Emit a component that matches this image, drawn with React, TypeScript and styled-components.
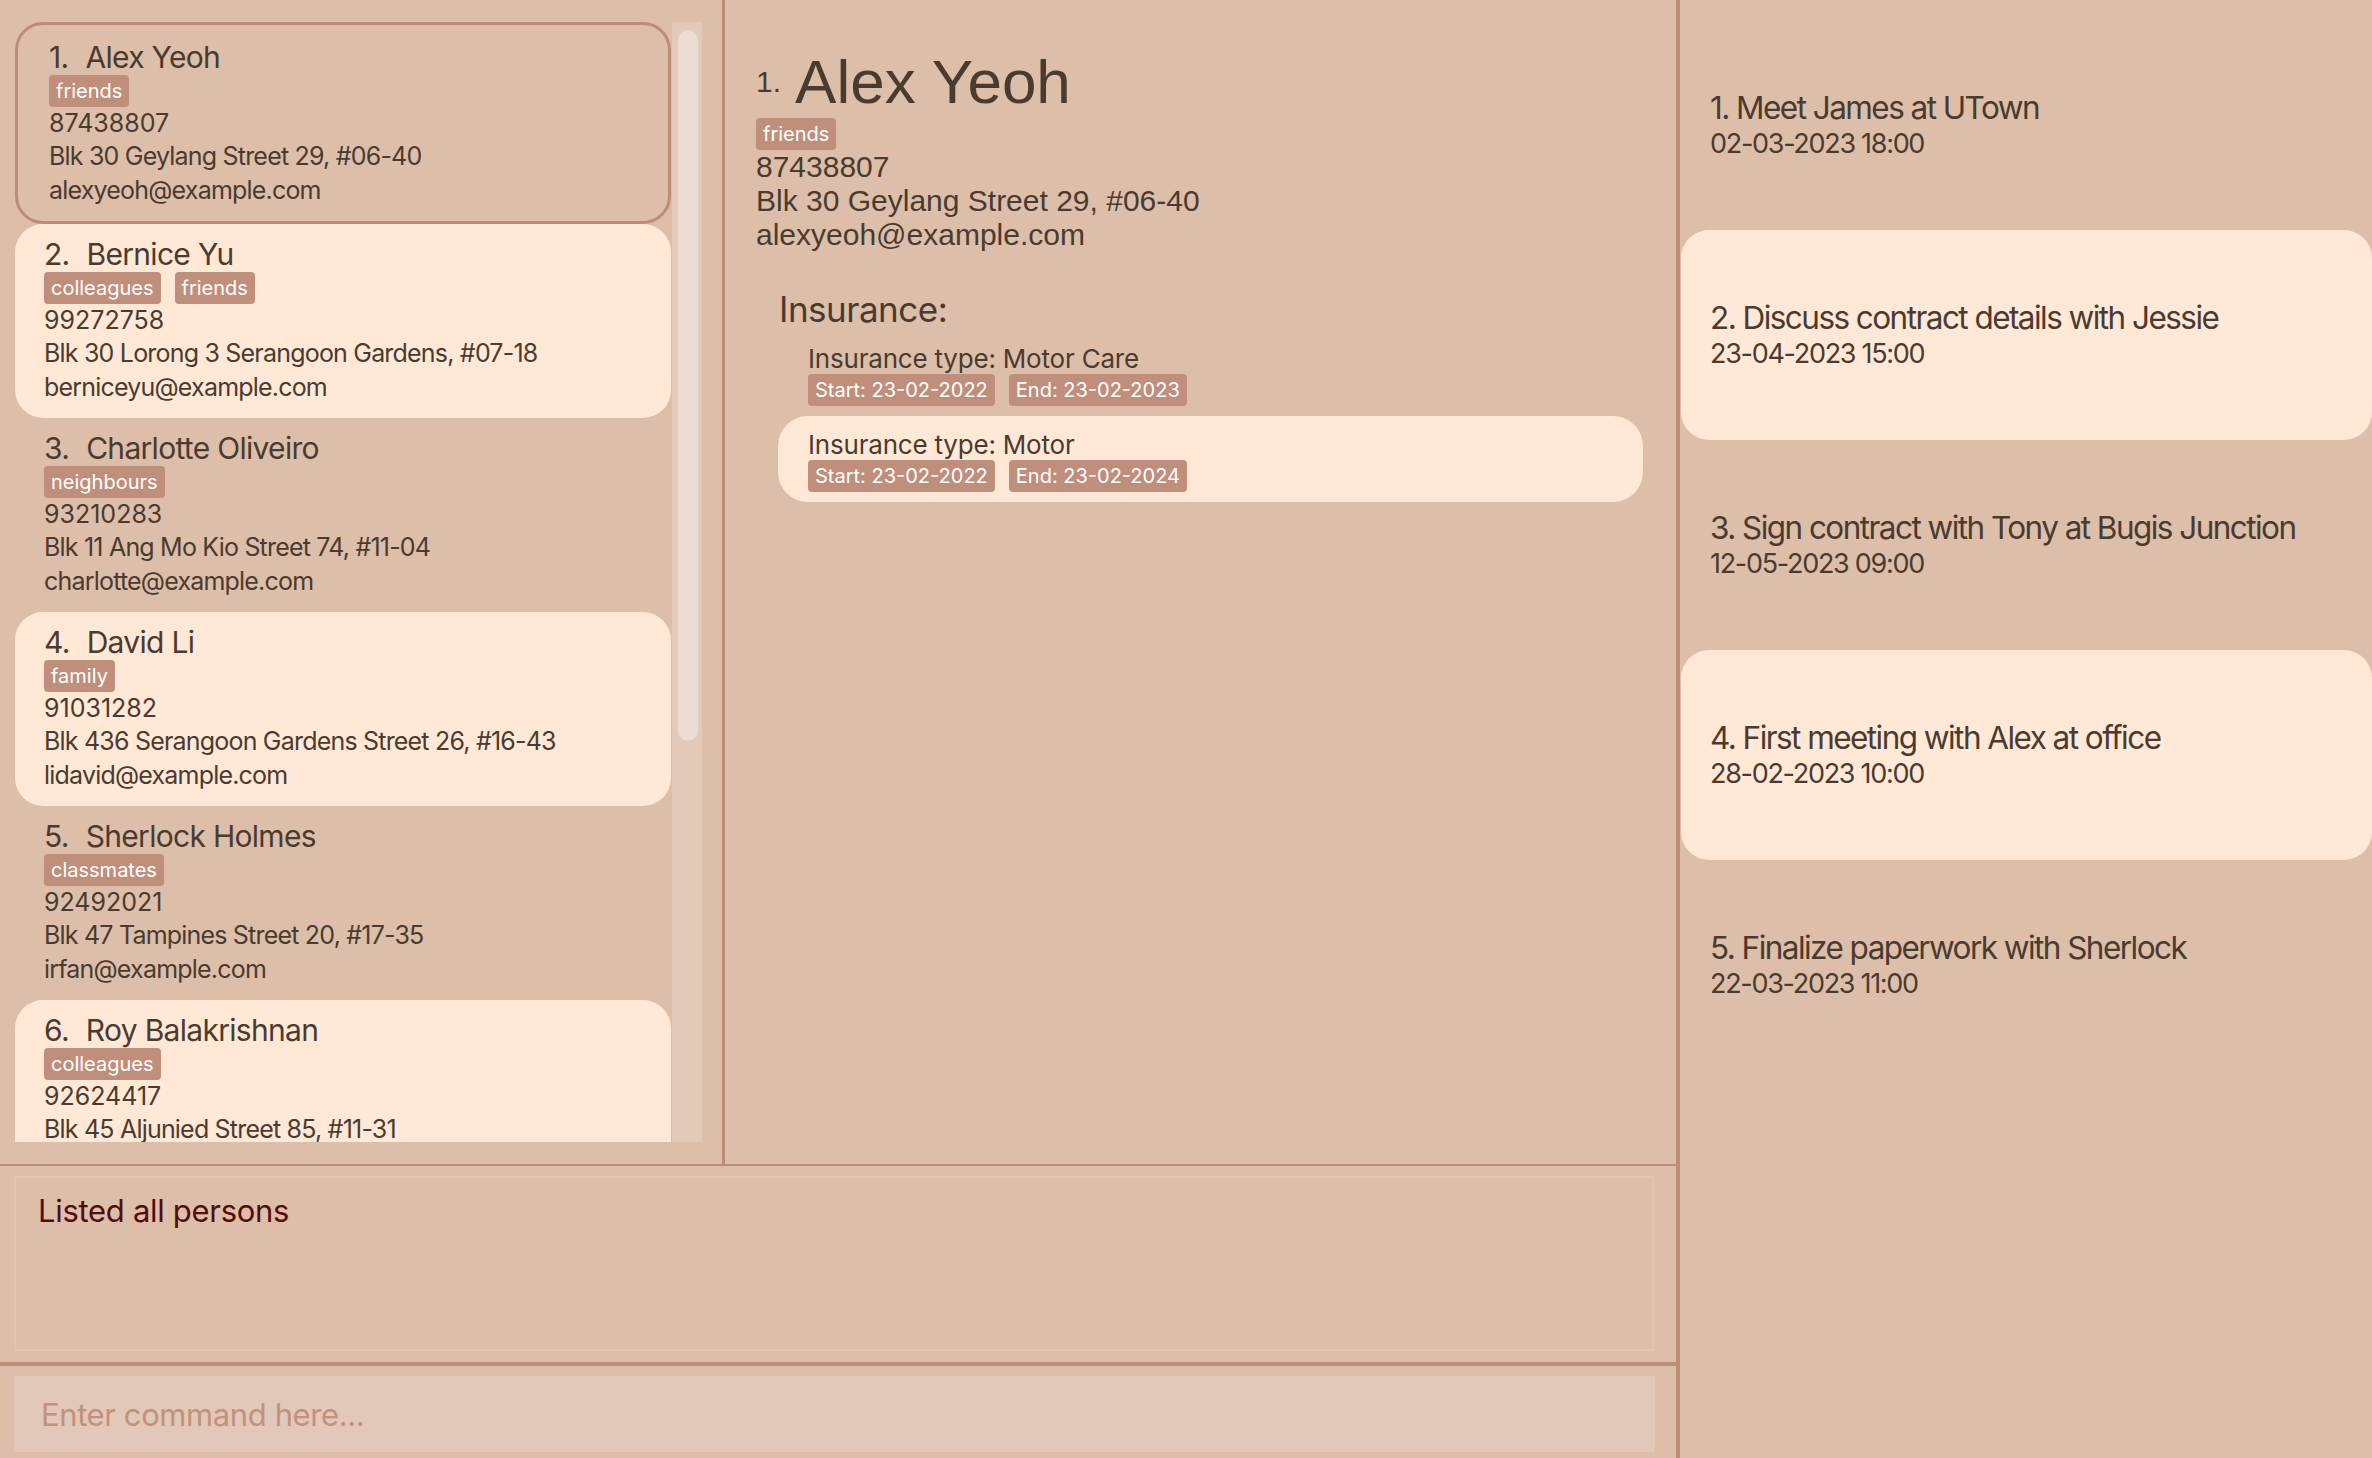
import React from "react";
import styled, { createGlobalStyle } from "styled-components";

const BG = "#DDBEA9";
const LIGHT = "#FFE8D6";
const LINE = "#BD8C77";
const TAG = "#BF8F7B";
const TEXT = "#4A3B30";
const SANS = `Inter, "Noto Sans", "Liberation Sans", sans-serif`;
const HELV = `"Liberation Sans", Arial, sans-serif`;

const Global = createGlobalStyle`
  html, body { margin: 0; padding: 0; background: ${BG}; }
  body { overflow: hidden; }
  * { box-sizing: border-box; }
`;

const Shell = styled.div`
  display: flex;
  width: 2372px;
  height: 1458px;
  background: ${BG};
  overflow: hidden;
  color: ${TEXT};
  font-family: ${SANS};
`;

const MainColumn = styled.div`
  width: 1676px;
  flex: none;
  display: flex;
  flex-direction: column;
`;

const TopArea = styled.div`
  height: 1164px;
  display: flex;
`;

const ListPanel = styled.div`
  width: 722px;
  flex: none;
  padding: 22px 0 0 15px;
`;

const ListViewport = styled.div`
  height: 1120px;
  display: flex;
  align-items: flex-start;
`;

const CardColumn = styled.div`
  width: 656px;
  height: 100%;
  overflow: hidden;
  display: flex;
  flex-direction: column;
`;

const Card = styled.div<{ $alt: boolean; $selected: boolean }>`
  flex: none;
  border-radius: 28px;
  background: ${(p) => (p.$alt ? LIGHT : "transparent")};
  border: ${(p) => (p.$selected ? `3px solid ${LINE}` : "none")};
  padding: ${(p) => (p.$selected ? "13.5px 20px 13.5px 31px" : "12px 20px 13.5px 29px")};
  display: flex;
  flex-direction: column;
`;

const NameRow = styled.div`
  display: flex;
  align-items: baseline;
  font-size: 30px;
  line-height: 36px;
  letter-spacing: -0.7px;
  white-space: nowrap;
`;

const Index = styled.span`
  margin-right: 17px;
`;

const TagRow = styled.div`
  display: flex;
  gap: 14px;
  height: 32px;
`;

const Tag = styled.span`
  display: inline-flex;
  align-items: center;
  height: 32px;
  padding: 0 7px;
  border-radius: 4px;
  background: ${TAG};
  color: #ffffff;
  font-family: ${SANS};
  font-size: 20px;
  white-space: nowrap;
`;

const Field = styled.div<{ $numeric?: boolean }>`
  font-size: 25px;
  line-height: 33.5px;
  letter-spacing: ${(p) => (p.$numeric ? "0px" : "-0.8px")};
  white-space: nowrap;
`;

const ScrollTrack = styled.div`
  width: 30px;
  height: 100%;
  margin-left: 1px;
  background: #e3c9b8;
  padding: 8px 4px 0 6px;
`;

const ScrollThumb = styled.div`
  height: 711px;
  border-radius: 10px;
  background: #eddcd1;
`;

const VDivider = styled.div<{ $w: number }>`
  width: ${(p) => p.$w}px;
  flex: none;
  background: ${LINE};
`;

const DetailPanel = styled.div`
  flex: 1;
  padding: 47px 33px 0 31px;
  font-family: ${HELV};
`;

const DetailHeader = styled.div`
  display: flex;
  align-items: center;
  height: 70px;
  white-space: nowrap;
`;

const DetailIndex = styled.span`
  font-size: 30px;
  margin-right: 14px;
`;

const DetailName = styled.span`
  font-size: 62px;
  line-height: 70px;
`;

const DetailTags = styled.div`
  display: flex;
  gap: 14px;
  margin-top: 1px;
`;

const DetailField = styled.div`
  font-size: 30px;
  line-height: 34px;
  white-space: nowrap;
`;

const InsuranceSection = styled.div`
  margin: 36px 0 0 22px;
  font-family: ${SANS};
`;

const InsuranceHeading = styled.div`
  font-size: 35px;
  line-height: 42px;
  letter-spacing: -0.5px;
  padding-left: 1px;
`;

const InsuranceItem = styled.div<{ $alt: boolean }>`
  height: 86px;
  border-radius: 30px;
  background: ${(p) => (p.$alt ? LIGHT : "transparent")};
  padding: 14px 30px 10px 30px;
`;

const InsuranceType = styled.div`
  font-size: 26px;
  line-height: 30px;
  letter-spacing: -0.2px;
  white-space: nowrap;
`;

const HLine = styled.div<{ $h: number }>`
  height: ${(p) => p.$h}px;
  flex: none;
  background: ${LINE};
`;

const ResultSection = styled.div`
  height: 196px;
  padding: 10px 22px 11px 14px;
`;

const ResultBox = styled.div`
  height: 100%;
  border: 2px solid #e2c5b2;
  padding: 13px 22px;
  color: #540c0c;
  font-size: 31px;
  line-height: 39px;
  letter-spacing: -0.3px;
`;

const CommandSection = styled.div`
  flex: 1;
  padding: 10px 21px 6px 14px;
`;

const CommandInput = styled.input`
  width: 100%;
  height: 76px;
  border: none;
  outline: none;
  background: #e2c8b8;
  padding: 0 27px;
  font-family: ${SANS};
  font-size: 31px;
  letter-spacing: -0.4px;
  color: ${TEXT};
  &::placeholder {
    color: #c2917c;
  }
`;

const RightPanel = styled.div`
  flex: 1;
  padding: 20px 0 0 1px;
  display: flex;
  flex-direction: column;
`;

const EventCell = styled.div<{ $alt: boolean }>`
  height: 210px;
  flex: none;
  border-radius: 28px;
  background: ${(p) => (p.$alt ? LIGHT : "transparent")};
  padding-left: 29px;
  display: flex;
  flex-direction: column;
  justify-content: center;
`;

const EventTitle = styled.div`
  font-size: 31.5px;
  line-height: 38px;
  letter-spacing: -1.55px;
  white-space: nowrap;
`;

const EventDate = styled.div`
  font-size: 27px;
  line-height: 34px;
  letter-spacing: -1.3px;
  white-space: nowrap;
`;

type Person = {
  name: string;
  tags: string[];
  phone: string;
  address: string;
  email: string;
};

const persons: Person[] = [
  { name: "Alex Yeoh", tags: ["friends"], phone: "87438807", address: "Blk 30 Geylang Street 29, #06-40", email: "alexyeoh@example.com" },
  { name: "Bernice Yu", tags: ["colleagues", "friends"], phone: "99272758", address: "Blk 30 Lorong 3 Serangoon Gardens, #07-18", email: "berniceyu@example.com" },
  { name: "Charlotte Oliveiro", tags: ["neighbours"], phone: "93210283", address: "Blk 11 Ang Mo Kio Street 74, #11-04", email: "charlotte@example.com" },
  { name: "David Li", tags: ["family"], phone: "91031282", address: "Blk 436 Serangoon Gardens Street 26, #16-43", email: "lidavid@example.com" },
  { name: "Sherlock Holmes", tags: ["classmates"], phone: "92492021", address: "Blk 47 Tampines Street 20, #17-35", email: "irfan@example.com" },
  { name: "Roy Balakrishnan", tags: ["colleagues"], phone: "92624417", address: "Blk 45 Aljunied Street 85, #11-31", email: "royb@example.com" },
];

const insurances = [
  { type: "Motor Care", start: "23-02-2022", end: "23-02-2023" },
  { type: "Motor", start: "23-02-2022", end: "23-02-2024" },
];

const events = [
  { title: "Meet James at UTown", when: "02-03-2023 18:00" },
  { title: "Discuss contract details with Jessie", when: "23-04-2023 15:00" },
  { title: "Sign contract with Tony at Bugis Junction", when: "12-05-2023 09:00" },
  { title: "First meeting with Alex at office", when: "28-02-2023 10:00" },
  { title: "Finalize paperwork with Sherlock", when: "22-03-2023 11:00" },
];

export default function App() {
  const sel = persons[0];
  return (
    <>
      <Global />
      <Shell>
        <MainColumn>
          <TopArea>
            <ListPanel>
              <ListViewport>
                <CardColumn>
                  {persons.map((p, i) => (
                    <Card key={p.name} $alt={i % 2 === 1} $selected={i === 0}>
                      <NameRow>
                        <Index>{i + 1}.</Index>
                        <span>{p.name}</span>
                      </NameRow>
                      <TagRow>
                        {p.tags.map((t) => (
                          <Tag key={t}>{t}</Tag>
                        ))}
                      </TagRow>
                      <Field $numeric>{p.phone}</Field>
                      <Field>{p.address}</Field>
                      <Field>{p.email}</Field>
                    </Card>
                  ))}
                </CardColumn>
                <ScrollTrack>
                  <ScrollThumb />
                </ScrollTrack>
              </ListViewport>
            </ListPanel>
            <VDivider $w={3} />
            <DetailPanel>
              <DetailHeader>
                <DetailIndex>1.</DetailIndex>
                <DetailName>{sel.name}</DetailName>
              </DetailHeader>
              <DetailTags>
                {sel.tags.map((t) => (
                  <Tag key={t}>{t}</Tag>
                ))}
              </DetailTags>
              <DetailField>{sel.phone}</DetailField>
              <DetailField>{sel.address}</DetailField>
              <DetailField>{sel.email}</DetailField>
              <InsuranceSection>
                <InsuranceHeading>Insurance:</InsuranceHeading>
                {insurances.map((ins, i) => (
                  <InsuranceItem key={i} $alt={i % 2 === 1}>
                    <InsuranceType>Insurance type: {ins.type}</InsuranceType>
                    <TagRow>
                      <Tag>Start: {ins.start}</Tag>
                      <Tag>End: {ins.end}</Tag>
                    </TagRow>
                  </InsuranceItem>
                ))}
              </InsuranceSection>
            </DetailPanel>
          </TopArea>
          <HLine $h={2} />
          <ResultSection>
            <ResultBox>Listed all persons</ResultBox>
          </ResultSection>
          <HLine $h={4} />
          <CommandSection>
            <CommandInput placeholder="Enter command here..." />
          </CommandSection>
        </MainColumn>
        <VDivider $w={4} />
        <RightPanel>
          {events.map((e, i) => (
            <EventCell key={e.title} $alt={i % 2 === 1}>
              <EventTitle>
                {i + 1}. {e.title}
              </EventTitle>
              <EventDate>{e.when}</EventDate>
            </EventCell>
          ))}
        </RightPanel>
      </Shell>
    </>
  );
}
